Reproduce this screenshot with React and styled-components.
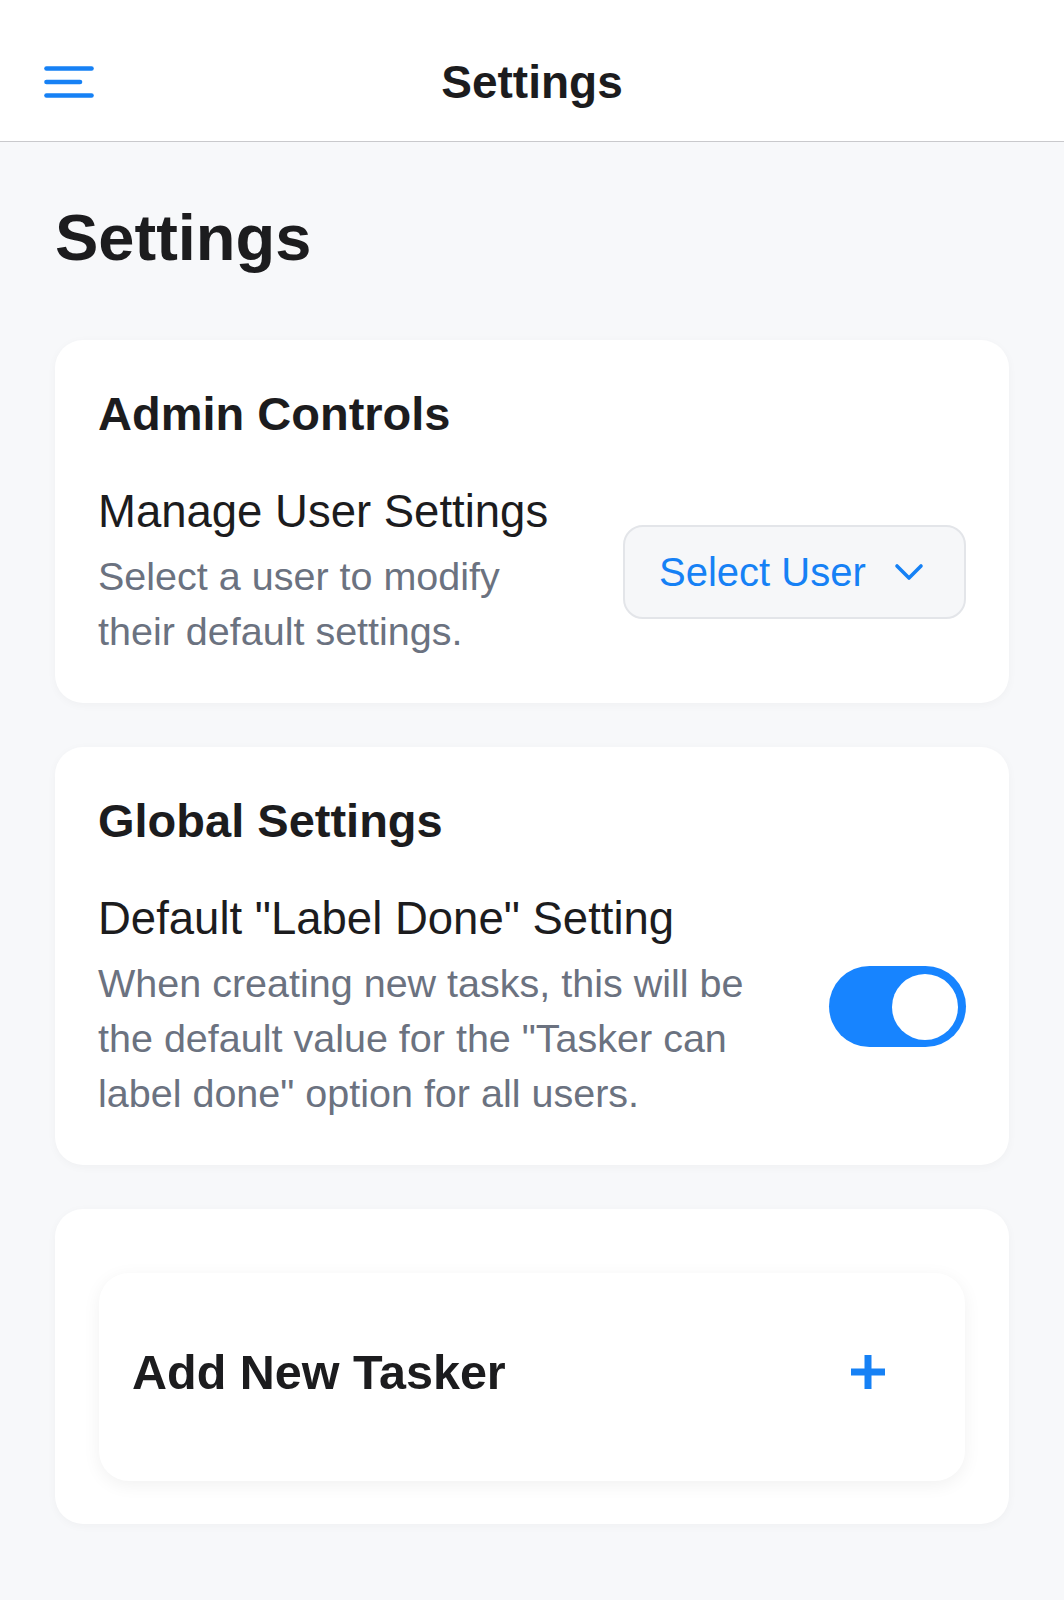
import React, { useState } from 'react'
import styled, { createGlobalStyle } from 'styled-components'

const GlobalStyle = createGlobalStyle`
  html, body {
    margin: 0;
    padding: 0;
    background: #f7f8fa;
  }
  body {
    font-family: 'Liberation Sans', Arial, sans-serif;
    color: #1c1c1e;
    -webkit-font-smoothing: antialiased;
  }
`

const Page = styled.div`
  min-height: 1600px;
  background: #f7f8fa;
`

const Header = styled.header`
  height: 142px;
  box-sizing: border-box;
  padding: 24px 44px 0;
  background: #fff;
  border-bottom: 1px solid #c9c9cc;
  display: grid;
  grid-template-columns: 1fr auto 1fr;
  align-items: center;
`

const MenuButton = styled.button`
  justify-self: start;
  border: 0;
  padding: 0;
  background: none;
  display: flex;
  cursor: pointer;
`

const HeaderTitle = styled.h1`
  margin: 0;
  font-size: 46px;
  font-weight: 700;
  line-height: 1.2;
  color: #1c1c1e;
`

const Main = styled.main`
  padding: 0 55px 40px;
`

const PageTitle = styled.h2`
  margin: 57px 0 63px;
  font-size: 65px;
  font-weight: 700;
  line-height: 78px;
  color: #1c1c1e;
`

const Stack = styled.div`
  display: flex;
  flex-direction: column;
  gap: 44px;
`

const Card = styled.section`
  background: #fff;
  border-radius: 28px;
  box-shadow: 0 2px 10px rgba(0, 0, 0, 0.035);
  padding: ${p => p.$padding || '46px 43px 44px'};
`

const CardTitle = styled.h3`
  margin: 0 0 44px;
  font-size: 47px;
  font-weight: 700;
  line-height: 55px;
  color: #1c1c1e;
`

const Row = styled.div`
  display: flex;
  align-items: center;
  gap: 48px;
`

const TextCol = styled.div`
  flex: 1;
  min-width: 0;
`

const Label = styled.div`
  font-size: 45.5px;
  line-height: 53px;
  color: #1c1c1e;
  margin-bottom: 11px;
`

const Description = styled.p`
  margin: 0;
  font-size: 39.5px;
  line-height: 55px;
  color: #6b7280;
`

const SelectButton = styled.button`
  flex: none;
  width: 343px;
  height: 94px;
  box-sizing: border-box;
  display: flex;
  align-items: center;
  gap: 28px;
  padding: 0 0 0 34px;
  background: #f6f7f9;
  border: 2px solid #e3e5e9;
  border-radius: 20px;
  font-family: inherit;
  font-size: 40px;
  color: #1681f5;
  cursor: pointer;
`

const Switch = styled.button`
  flex: none;
  width: 137px;
  height: 81px;
  border: 0;
  padding: 0 8px;
  border-radius: 41px;
  background: ${p => (p.$on ? '#1784ff' : '#e5e5ea')};
  display: flex;
  align-items: center;
  justify-content: ${p => (p.$on ? 'flex-end' : 'flex-start')};
  cursor: pointer;
`

const Knob = styled.span`
  width: 66px;
  height: 66px;
  border-radius: 50%;
  background: #fff;
`

const TaskerCard = styled.button`
  width: 100%;
  height: 208px;
  box-sizing: border-box;
  border: 0;
  background: #fff;
  border-radius: 30px;
  box-shadow: 0 4px 18px rgba(0, 0, 0, 0.06);
  display: flex;
  align-items: center;
  justify-content: space-between;
  padding: 0 80px 10px 33px;
  font-family: inherit;
  cursor: pointer;
`

const TaskerLabel = styled.span`
  font-size: 48.5px;
  font-weight: 700;
  color: #1c1c1e;
`

const MenuIcon = () => (
  <svg width='50' height='33' viewBox='0 0 50 33'>
    <g stroke='#1681f5' strokeWidth='4.6' strokeLinecap='round'>
      <line x1='2.5' y1='2.5' x2='47.5' y2='2.5' />
      <line x1='2.5' y1='16' x2='36' y2='16' />
      <line x1='2.5' y1='29.5' x2='47.5' y2='29.5' />
    </g>
  </svg>
)

const Chevron = () => (
  <svg width='30' height='18' viewBox='0 0 30 18'>
    <polyline
      points='3,3 15,15 27,3'
      fill='none'
      stroke='#1681f5'
      strokeWidth='3.6'
      strokeLinecap='round'
      strokeLinejoin='round'
    />
  </svg>
)

const PlusIcon = () => (
  <svg width='34' height='34' viewBox='0 0 34 34'>
    <g stroke='#1681f5' strokeWidth='7'>
      <line x1='17' y1='0' x2='17' y2='34' />
      <line x1='0' y1='17' x2='34' y2='17' />
    </g>
  </svg>
)

const App = () => {
  const [labelDone, setLabelDone] = useState(true)

  return (
    <Page>
      <GlobalStyle />
      <Header>
        <MenuButton aria-label='Menu'>
          <MenuIcon />
        </MenuButton>
        <HeaderTitle>Settings</HeaderTitle>
        <span />
      </Header>
      <Main>
        <PageTitle>Settings</PageTitle>
        <Stack>
          <Card>
            <CardTitle>Admin Controls</CardTitle>
            <Row>
              <TextCol>
                <Label>Manage User Settings</Label>
                <Description>
                  Select a user to modify their default settings.
                </Description>
              </TextCol>
              <SelectButton>
                Select User
                <Chevron />
              </SelectButton>
            </Row>
          </Card>
          <Card>
            <CardTitle>Global Settings</CardTitle>
            <Row>
              <TextCol>
                <Label>Default "Label Done" Setting</Label>
                <Description>
                  When creating new tasks, this will be the default value for
                  the "Tasker can label done" option for all users.
                </Description>
              </TextCol>
              <Switch
                role='switch'
                aria-checked={labelDone}
                $on={labelDone}
                onClick={() => setLabelDone(!labelDone)}
              >
                <Knob />
              </Switch>
            </Row>
          </Card>
          <Card $padding='64px 44px 43px'>
            <TaskerCard>
              <TaskerLabel>Add New Tasker</TaskerLabel>
              <PlusIcon />
            </TaskerCard>
          </Card>
        </Stack>
      </Main>
    </Page>
  )
}

export default App
